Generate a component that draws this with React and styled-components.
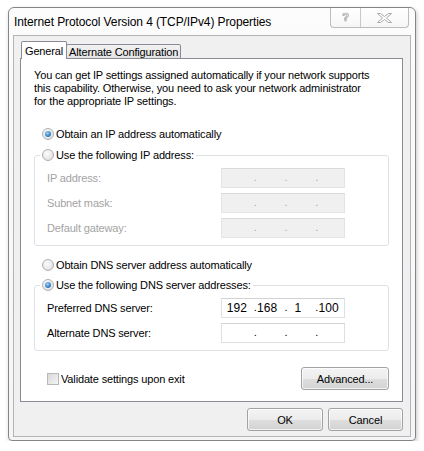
import React from 'react'
import styled, { createGlobalStyle } from 'styled-components'

const GlobalStyle = createGlobalStyle`
  html, body {
    margin: 0;
    padding: 0;
    background: #ffffff;
  }
  body {
    font-family: "Liberation Sans", Arial, sans-serif;
    font-size: 11px;
    letter-spacing: -0.15px;
    color: #000;
  }
`

const Page = styled.div`
  padding: 7px 0 0 8px;
`

const Window = styled.div`
  width: 408px;
  height: 434px;
  box-sizing: border-box;
  border: 1px solid #858585;
  border-radius: 6px 6px 4px 4px;
  background: linear-gradient(#fcfcfc, #f4f5f6);
  box-shadow: 1px 2px 4px rgba(0, 0, 0, 0.22);
  display: flex;
  flex-direction: column;
  padding: 0 4px 3px 4px;
`

const TitleBar = styled.div`
  height: 27px;
  display: flex;
  align-items: flex-start;
  flex-shrink: 0;
`

const Title = styled.div`
  align-self: center;
  padding: 1px 0 0 1px;
  font-size: 12px;
  letter-spacing: -0.1px;
  color: #000;
`

const CaptionButtons = styled.div`
  margin-left: auto;
  margin-right: 2px;
  display: flex;
  height: 19px;
  border: 1px solid #bcbcbc;
  border-top: none;
  border-radius: 0 0 4px 4px;
  background: linear-gradient(#ffffff, #f6f6f6);
`

const CaptionButton = styled.div`
  width: ${p => p.$w}px;
  display: flex;
  align-items: center;
  justify-content: center;
  & + & {
    border-left: 1px solid #c8c8c8;
  }
`

const HelpGlyph = styled.span`
  font-size: 11px;
  font-weight: bold;
  color: #ffffff;
  -webkit-text-stroke: 0.7px #a0a0a0;
  line-height: 1;
`

const Client = styled.div`
  flex: 1;
  display: flex;
  flex-direction: column;
  border: 1px solid #b4b4b4;
  background: #f0f0f0;
  padding: 5px 7px 5px 6px;
`

const TabStrip = styled.div`
  display: flex;
  align-items: flex-end;
  padding-left: 1px;
  margin-bottom: -1px;
  position: relative;
  z-index: 1;
`

const Tab = styled.div`
  box-sizing: border-box;
  height: ${p => (p.$active ? 18 : 15)}px;
  padding: 0 ${p => (p.$active ? 3 : 2)}px;
  display: flex;
  align-items: center;
  border: 1px solid #898c95;
  border-bottom: ${p => (p.$active ? 'none' : '1px solid #898c95')};
  border-radius: 2px 2px 0 0;
  background: ${p => (p.$active ? '#ffffff' : 'linear-gradient(#f2f2f2, #e3e3e3)')};
  & + & {
    margin-left: -1px;
  }
`

const Panel = styled.div`
  flex: 1;
  background: #ffffff;
  border: 1px solid #898c95;
  padding: 10px 13px 0 13px;
  display: flex;
  flex-direction: column;
`

const Description = styled.p`
  margin: 0;
  line-height: 13px;
`

const OptionRow = styled.label`
  display: flex;
  align-items: center;
  height: 16px;
  margin-top: ${p => p.$mt || 0}px;
  padding-left: ${p => p.$pl || 0}px;
  gap: 2px;
`

const Radio = styled.span`
  width: 12px;
  height: 12px;
  box-sizing: border-box;
  border-radius: 50%;
  border: 1px solid #b0b0b0;
  background: radial-gradient(circle at 40% 35%, #fbfbfb 0%, #e8e8e8 60%, #d6d6d6 100%);
  display: flex;
  align-items: center;
  justify-content: center;
  flex-shrink: 0;
  &::after {
    content: '';
    display: ${p => (p.$checked ? 'block' : 'none')};
    width: 6px;
    height: 6px;
    border-radius: 50%;
    background: radial-gradient(circle at 40% 35%, #a6d4f5 0%, #3a86c8 55%, #1d5e9e 100%);
  }
`

const Group = styled.fieldset`
  margin: ${p => p.$mt || 0}px 0 0 0;
  padding: 5px 0 7px 0;
  border: 1px solid #dde2e6;
  border-radius: 3px;
  display: flex;
  flex-direction: column;
  gap: 5px;
`

const Legend = styled.legend`
  margin-left: 5px;
  padding: 0 2px;
  height: 16px;
`

const FieldRow = styled.div`
  display: flex;
  align-items: center;
  padding-left: 12px;
  height: 20px;
`

const FieldLabel = styled.span`
  width: 174px;
  color: ${p => (p.$disabled ? '#a3a3a3' : '#000')};
`

const IpBox = styled.div`
  width: 124px;
  height: 20px;
  box-sizing: border-box;
  display: flex;
  border: 1px solid ${p => (p.$disabled ? '#e4e4e4' : '#dcdfe3')};
  border-top-color: ${p => (p.$disabled ? '#dadada' : '#cfd2d6')};
  background: ${p => (p.$disabled ? '#f0f0f0' : '#ffffff')};
`

const Segment = styled.span`
  position: relative;
  width: 31px;
  display: flex;
  align-items: center;
  justify-content: center;
  font-size: 12px;
  letter-spacing: 0;
  &:first-child {
    width: 30px;
  }
  &:not(:first-child)::before {
    content: '.';
    position: absolute;
    left: 2px;
    top: 2px;
    color: ${p => (p.$disabled ? '#a8a8a8' : '#000')};
    font-size: 11px;
  }
`

const BottomRow = styled.div`
  margin-top: 16px;
  display: flex;
  align-items: center;
  justify-content: space-between;
`

const CheckRow = styled.label`
  display: flex;
  align-items: center;
  gap: 2px;
  padding-left: 13px;
`

const CheckBox = styled.span`
  width: 12px;
  height: 12px;
  box-sizing: border-box;
  border: 1px solid #b8b8b8;
  background: linear-gradient(135deg, #d8d8d8, #f6f6f6);
`

const Button = styled.button`
  width: ${p => p.$w}px;
  height: 23px;
  box-sizing: border-box;
  border: 1px solid #a3a3a3;
  border-radius: 3px;
  background: linear-gradient(#f4f4f4 0%, #ececec 50%, #dedede 51%, #d3d3d3 100%);
  font-family: "Liberation Sans", Arial, sans-serif;
  font-size: 11px;
  letter-spacing: -0.15px;
  color: #000;
  padding: 0;
  box-shadow: inset 0 0 0 1px rgba(255, 255, 255, 0.7);
`

const ButtonRow = styled.div`
  margin-top: 6px;
  display: flex;
  justify-content: flex-end;
  gap: 5px;
`

const IpField = ({ values = ['', '', '', ''], disabled }) => (
  <IpBox $disabled={disabled}>
    {values.map((v, i) => (
      <Segment key={i} $disabled={disabled}>{v}</Segment>
    ))}
  </IpBox>
)

const CloseIcon = () => (
  <svg width="15" height="10" viewBox="0 0 15 10">
    <path
      d="M0.5 0.5 H3.5 L7.5 3.5 L11.5 0.5 H14.5 L9.5 5 L14.5 9.5 H11.5 L7.5 6.5 L3.5 9.5 H0.5 L5.5 5 Z"
      fill="#ffffff"
      stroke="#a8a8a8"
      strokeWidth="1"
      strokeLinejoin="round"
    />
  </svg>
)

export default function App() {
  return (
    <Page>
      <GlobalStyle />
      <Window>
        <TitleBar>
          <Title>Internet Protocol Version 4 (TCP/IPv4) Properties</Title>
          <CaptionButtons>
            <CaptionButton $w={29}><HelpGlyph>?</HelpGlyph></CaptionButton>
            <CaptionButton $w={47}><CloseIcon /></CaptionButton>
          </CaptionButtons>
        </TitleBar>
        <Client>
          <TabStrip>
            <Tab $active>General</Tab>
            <Tab>Alternate Configuration</Tab>
          </TabStrip>
          <Panel>
            <Description>
              You can get IP settings assigned automatically if your network supports<br />
              this capability. Otherwise, you need to ask your network administrator<br />
              for the appropriate IP settings.
            </Description>

            <OptionRow $mt={18} $pl={8}>
              <Radio $checked />Obtain an IP address automatically
            </OptionRow>

            <Group $mt={5}>
              <Legend>
                <OptionRow>
                  <Radio />Use the following IP address:
                </OptionRow>
              </Legend>
              <FieldRow>
                <FieldLabel $disabled>IP address:</FieldLabel>
                <IpField disabled />
              </FieldRow>
              <FieldRow>
                <FieldLabel $disabled>Subnet mask:</FieldLabel>
                <IpField disabled />
              </FieldRow>
              <FieldRow>
                <FieldLabel $disabled>Default gateway:</FieldLabel>
                <IpField disabled />
              </FieldRow>
            </Group>

            <OptionRow $mt={11} $pl={8}>
              <Radio />Obtain DNS server address automatically
            </OptionRow>

            <Group $mt={4}>
              <Legend>
                <OptionRow>
                  <Radio $checked />Use the following DNS server addresses:
                </OptionRow>
              </Legend>
              <FieldRow>
                <FieldLabel>Preferred DNS server:</FieldLabel>
                <IpField values={['192', '168', '1', '100']} />
              </FieldRow>
              <FieldRow>
                <FieldLabel>Alternate DNS server:</FieldLabel>
                <IpField />
              </FieldRow>
            </Group>

            <BottomRow>
              <CheckRow>
                <CheckBox />Validate settings upon exit
              </CheckRow>
              <Button $w={88}>Advanced...</Button>
            </BottomRow>
          </Panel>
          <ButtonRow>
            <Button $w={76}>OK</Button>
            <Button $w={75}>Cancel</Button>
          </ButtonRow>
        </Client>
      </Window>
    </Page>
  )
}
